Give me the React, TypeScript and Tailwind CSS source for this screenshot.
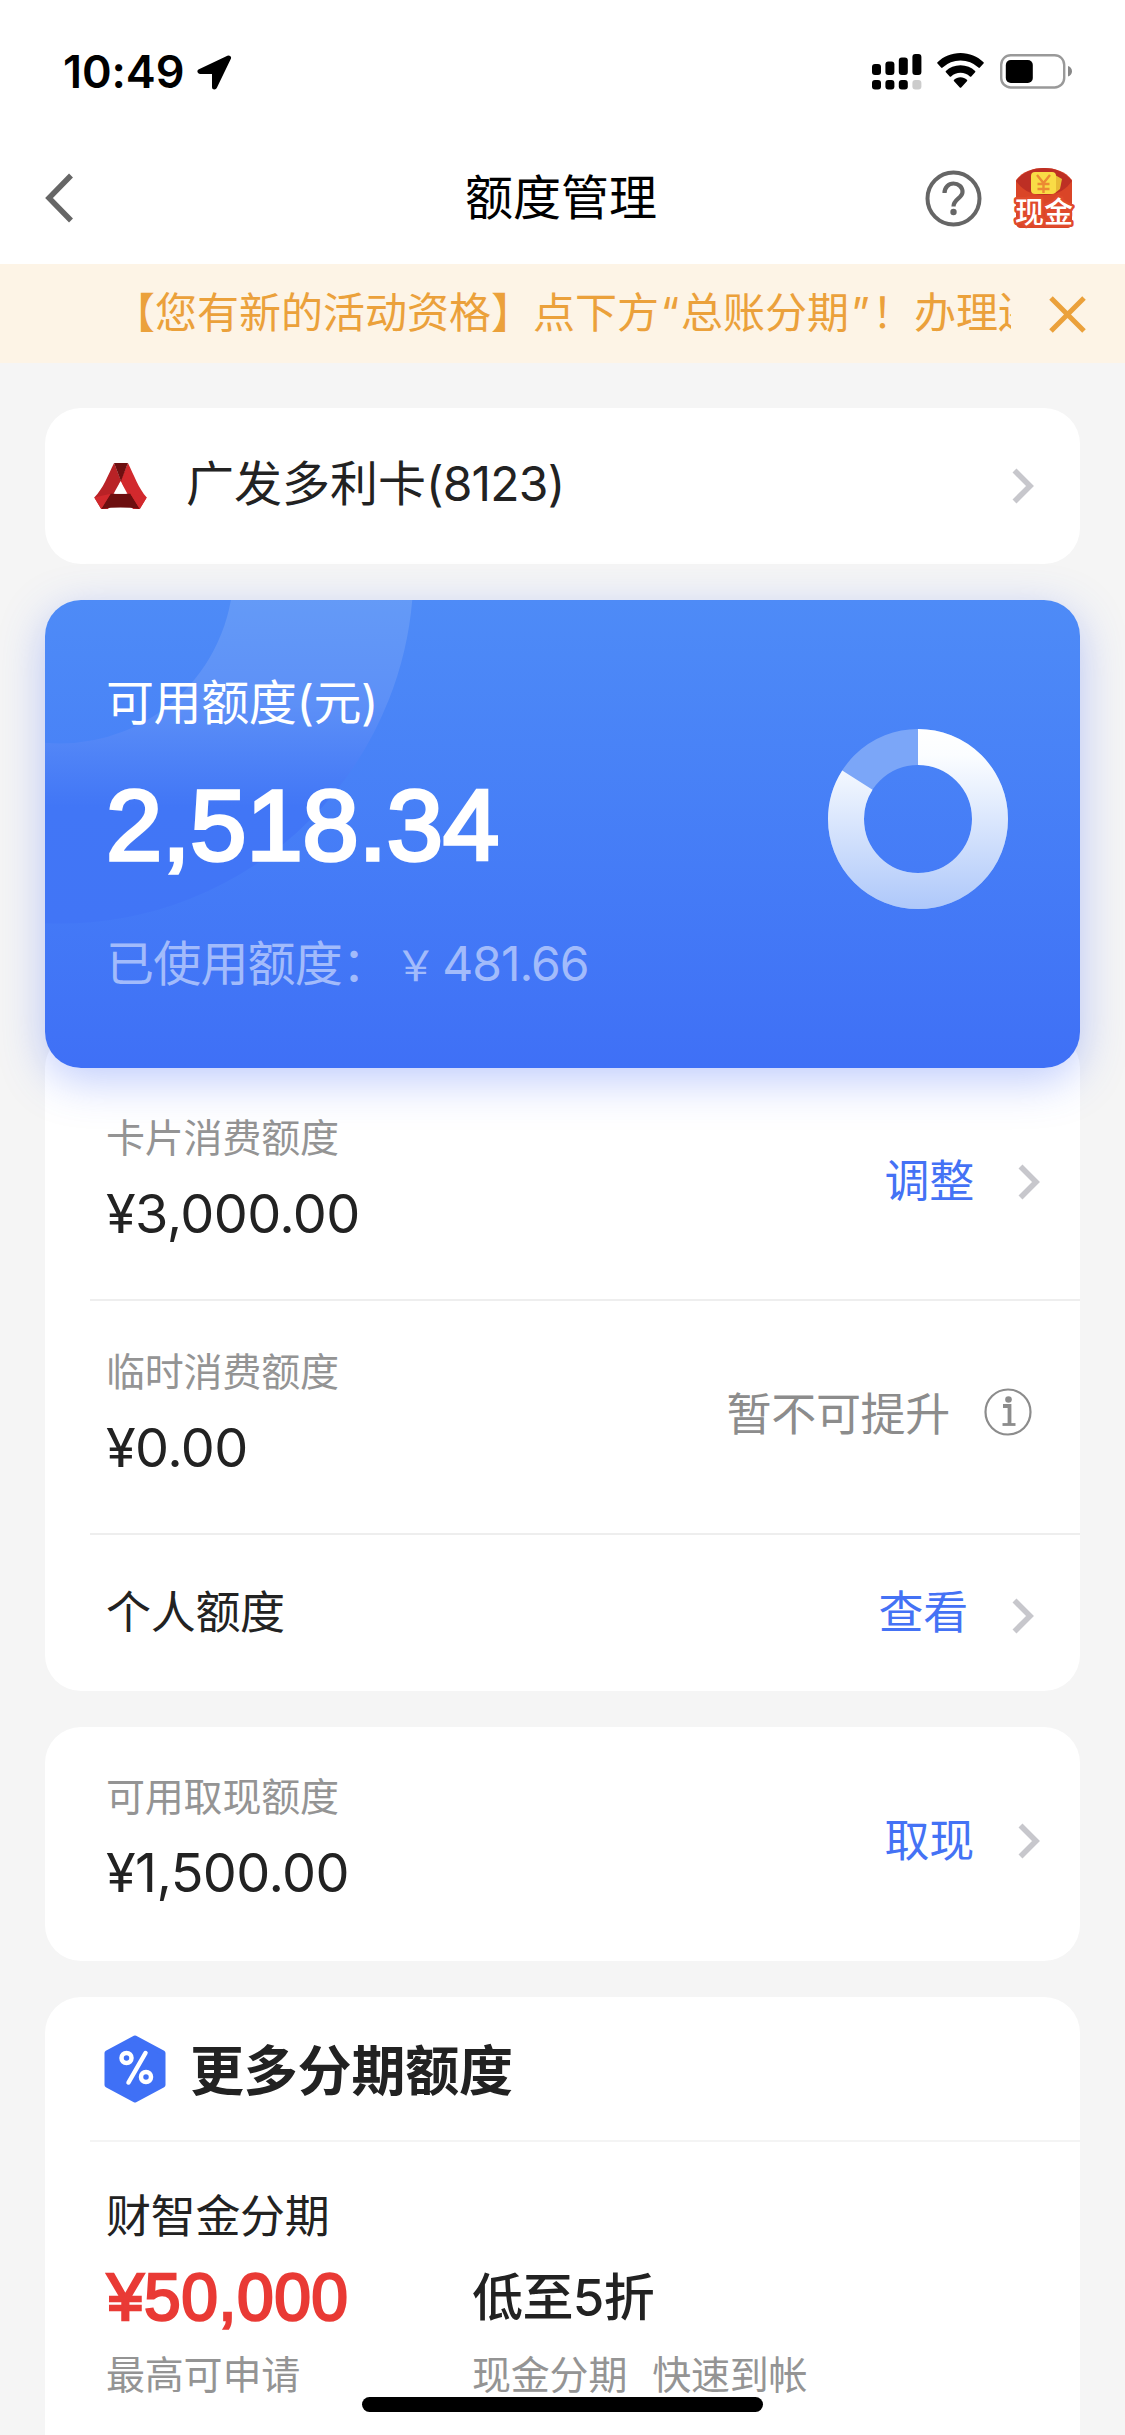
import React from 'react';

function Card({ children, className = '' }: { children: React.ReactNode; className?: string }) {
  return <section className={`mx-[45px] rounded-[36px] bg-white ${className}`}>{children}</section>;
}

function Chevron({ className = '' }: { className?: string }) {
  return (
    <svg className={className} width="22" height="36" viewBox="0 0 22 36" fill="none" stroke="#c7c7cc" strokeWidth="5.6">
      <path d="M2.5 2.5 18 18 2.5 33.5" />
    </svg>
  );
}

function Action({ label, className = '', iconClassName = '' }: { label: string; className?: string; iconClassName?: string }) {
  return (
    <div className={`flex items-center gap-[44px] ${className}`}>
      <span className="text-[45px] leading-[60px] tracking-[-0.3px] text-[#4472f5]">{label}</span>
      <Chevron className={iconClassName} />
    </div>
  );
}

function LimitText({ label, amount }: { label: string; amount: string }) {
  return (
    <div>
      <div className="text-[39px] leading-[54px] tracking-[-0.2px] text-[#949494]">{label}</div>
      <div className="mt-[17px] text-[54px] leading-[64px] tracking-[-0.6px] text-[#222222]">{amount}</div>
    </div>
  );
}

function StatusBar() {
  const bars = [
    { x: 0, y: 10, h: 11 },
    { x: 13.4, y: 7.5, h: 13.5 },
    { x: 26.8, y: 3.5, h: 17.5 },
    { x: 40.4, y: 0, h: 21 },
  ];
  return (
    <div className="flex h-[132px] items-start pt-[44px]">
      <span className="ml-[63px] w-[134px] text-[45px] leading-[56px] font-semibold tracking-[-0.1px] text-black">10:49</span>
      <svg className="mt-[11px]" width="35" height="35" viewBox="0 0 35 35">
        <path
          d="M31.500 3 3 16.500h14.500V32Z"
          fill="#000"
          stroke="#000"
          strokeWidth="5"
          strokeLinejoin="round"
        />
      </svg>
      <svg className="mt-[10px] ml-[640px]" width="50" height="36" viewBox="0 0 50 36">
        {bars.map((b, i) => (
          <g key={b.x}>
            <rect x={b.x} y={b.y} width="9" height={b.h} rx="3" fill="#000" />
            <rect x={b.x} y="26" width="9" height="9.500" rx="3" fill={i === 3 ? '#cccccc' : '#000'} />
          </g>
        ))}
      </svg>
      <svg className="mt-[9px] ml-[15px]" width="47" height="36" viewBox="0 0 47 36">
        <path d="M23.500 0C32.500 0 40.500 3.500 46.500 9.200a1 1 0 0 1 0 1.400l-3.600 4a1 1 0 0 1-1.500 0A26.500 26.500 0 0 0 23.500 7.600 26.500 26.500 0 0 0 5.600 14.600a1 1 0 0 1-1.500 0l-3.600-4a1 1 0 0 1 0-1.400C6.500 3.500 14.500 0 23.500 0Z" />
        <path d="M23.500 12.200c5.800 0 10.900 2.100 14.600 5.700a1 1 0 0 1 0 1.400l-3.800 4.100a1 1 0 0 1-1.400 0 14 14 0 0 0-18.800 0 1 1 0 0 1-1.400 0l-3.800-4.100a1 1 0 0 1 0-1.400c3.700-3.600 8.800-5.700 14.600-5.700Z" />
        <path d="M23.500 24.300c2.500 0 4.700.9 6.400 2.400a1 1 0 0 1 0 1.500l-5.700 6.200a1 1 0 0 1-1.400 0l-5.700-6.200a1 1 0 0 1 0-1.500c1.700-1.500 3.900-2.400 6.400-2.400Z" />
      </svg>
      <svg className="mt-[10px] ml-[16px]" width="74" height="35" viewBox="0 0 74 35">
        <rect x="1.200" y="1.200" width="63" height="32.300" rx="9.500" fill="none" stroke="#999" strokeWidth="2.400" />
        <rect x="5.800" y="6" width="27" height="23" rx="5" />
        <path d="M68 12c2.500.8 4 2.800 4 5.200s-1.500 4.400-4 5.200Z" fill="#888" />
      </svg>
    </div>
  );
}

function CashBadge() {
  return (
    <svg width="62" height="62" viewBox="0 0 62 62">
      <path d="M3 13C10 4 20 1 31 1s21 3 28 12v43c0 3-2 5-5 5H8c-3 0-5-2-5-5Z" fill="#da4527" />
      <path d="M3 14C10 5 20 1 31 1s21 4 28 13C54 21 46 28 31 28S8 21 3 14Z" fill="#bd2f24" />
      <path d="m42 8 7 4-2 10-5 4Z" fill="#e8bb35" />
      <rect x="18" y="5" width="25" height="22" rx="4" fill="#f9dc46" />
      <path d="m24 8 6.500 8L37 8M30.500 16v10M24.500 17h12M24.500 22h12" fill="none" stroke="#ec8a33" strokeWidth="2.400" />
      <text
        x="31"
        y="56"
        textAnchor="middle"
        fontSize="29"
        fontWeight="500"
        fill="#fff"
        stroke="#e04a2c"
        strokeWidth="5"
        strokeLinejoin="round"
        paintOrder="stroke"
      >
        现金
      </text>
    </svg>
  );
}

function NavBar() {
  return (
    <header className="flex h-[132px] items-center">
      <svg className="ml-[45px]" width="30" height="50" viewBox="0 0 30 50" fill="none" stroke="#666" strokeWidth="5.500">
        <path d="M26 2.500 4 25l22 22.500" />
      </svg>
      <h1 className="ml-[390px] w-[192px] text-[48px] leading-[60px] text-black">额度管理</h1>
      <svg className="ml-[268px]" width="57" height="57" viewBox="0 0 57 57" fill="none" stroke="#666">
        <circle cx="28.500" cy="28.500" r="26" strokeWidth="4" />
        <path d="M19.500 23c0-5.500 4-9.500 9-9.500s9 3.500 9 8.500c0 6-9 7-9 14.500" strokeWidth="4.200" />
        <circle cx="28.500" cy="42" r="3.200" fill="#666" stroke="none" />
      </svg>
      <div className="ml-[31px]">
        <CashBadge />
      </div>
    </header>
  );
}

function Notice() {
  return (
    <div className="flex h-[99px] items-center bg-[#fdf4e6] text-[#eba13b]">
      <div className="mb-[2px] ml-[113px] w-[898px] overflow-hidden text-[42px] leading-[60px] whitespace-nowrap">
        【您有新的活动资格】点下方<span className="inline-block w-[22px] text-center">“</span>总账分期
        <span className="inline-block w-[23px] text-center">”</span>！办理还
      </div>
      <svg className="mt-[2px] ml-[38px]" width="37" height="37" viewBox="0 0 37 37" stroke="#eba13b" strokeWidth="5">
        <path d="m2 2 33 33M35 2 2 35" />
      </svg>
    </div>
  );
}

function BankLogo() {
  return (
    <svg width="53" height="46" viewBox="0 0 53 46.5">
      <path d="M20 0 27 18 14 46.500H7L0 35C9 26 14 12 20 0Z" fill="#b92226" />
      <path d="M34 0c6 12 11 26 19 35l-7 11.500h-7L26.500 18Z" fill="#d2292d" />
      <path d="m20 0 7 18.500L34 0Z" fill="#6d0f10" />
      <path d="M16.500 31h20L46 46.500c-13-2-26-2-39 0Z" fill="#6d0f10" />
      <path d="m0 35 16.500-4L7 46.500ZM53 35l-16.500-4L46 46.500Z" fill="#d2292d" />
      <path d="m26.500 18.500-7 12.500h14Z" fill="#fff" />
    </svg>
  );
}

function Donut() {
  const r = 72;
  const len = 2 * Math.PI * r;
  const used = 481.66 / 3000;
  return (
    <svg width="180" height="180" viewBox="0 0 180 180" fill="none" strokeWidth="36">
      <defs>
        <linearGradient id="ring" gradientUnits="userSpaceOnUse" x1="180" y1="0" x2="0" y2="0">
          <stop offset="0" stopColor="#ffffff" />
          <stop offset=".15" stopColor="#fbfdff" />
          <stop offset="1" stopColor="#aec8fa" />
        </linearGradient>
      </defs>
      <g transform="rotate(-90 90 90)">
        <circle cx="90" cy="90" r={r} stroke="#7ba6f8" />
        <circle cx="90" cy="90" r={r} stroke="url(#ring)" strokeDasharray={`${len * (1 - used)} ${len}`} />
      </g>
    </svg>
  );
}

function Available() {
  return (
    <section className="relative z-10 mx-[45px] mt-[36px] flex h-[468px] rounded-[36px] bg-linear-to-b from-[#4e8bf7] to-[#3f70f6] shadow-[0_12px_45px_rgba(64,104,246,0.34)]">
      <svg className="absolute inset-0 rounded-[36px]" width="1035" height="468" viewBox="0 0 1035 468">
        <defs>
          <linearGradient id="arc" gradientUnits="userSpaceOnUse" x1="0" y1="0" x2="0" y2="323">
            <stop offset="0" stopColor="#649af7" />
            <stop offset=".32" stopColor="#5d90f7" />
            <stop offset=".64" stopColor="#4176f6" />
            <stop offset="1" stopColor="#4175f6" />
          </linearGradient>
        </defs>
        <circle cx="15" cy="-30" r="263.500" fill="none" stroke="url(#arc)" strokeWidth="180" />
      </svg>
      <div className="relative w-[783px] pl-[61px] text-white">
        <div className="mt-[73px] text-[48px] leading-[60px] tracking-[-0.4px]">可用额度(元)</div>
        <div className="mt-[37px] font-['Liberation_Sans',sans-serif] text-[101px] leading-[110px] [-webkit-text-stroke:3.6px_white]">
          2,518.34
        </div>
        <div className="mt-[54px] text-[48px] leading-[60px] whitespace-nowrap text-[#a2bbfb]">
          <span className="tracking-[-0.8px]">已使用额度：</span>
          <span className="inline-block w-[53px] text-center text-[42px]">￥</span>
          <span className="tracking-[-1px]">481.66</span>
        </div>
      </div>
      <div className="relative mt-[129px]">
        <Donut />
      </div>
    </section>
  );
}

function Info() {
  return (
    <svg className="mb-[5px]" width="48" height="48" viewBox="0 0 48 48" fill="none" stroke="#8c8c8c">
      <circle cx="24" cy="24" r="22.500" strokeWidth="2.200" />
      <circle cx="24.500" cy="11.500" r="3.300" fill="#8c8c8c" stroke="none" />
      <path d="M19 18h6.500v18.500" strokeWidth="3.800" />
      <path d="M18.500 36.500h13" strokeWidth="2.800" />
    </svg>
  );
}

function PercentIcon() {
  return (
    <svg width="62" height="68" viewBox="0 0 62 68">
      <path d="M31 3 59 18v32L31 65 3 50V18Z" fill="#3f70f6" stroke="#3f70f6" strokeWidth="5" strokeLinejoin="round" />
      <g fill="none" stroke="#fff" strokeWidth="4.500" strokeLinecap="round">
        <circle cx="22.500" cy="23" r="5" />
        <circle cx="42" cy="42" r="5" />
        <path d="M41.500 18 24.500 47.500" />
      </g>
    </svg>
  );
}

export default function App() {
  return (
    <main className="relative h-[2435px] w-[1125px] overflow-hidden bg-[#f5f5f5] font-[Inter,'Noto_Sans_CJK_SC',sans-serif] text-[#222222]">
      <div className="bg-white">
        <StatusBar />
        <NavBar />
      </div>
      <Notice />

      <Card className="mt-[45px] flex h-[156px] items-center">
        <div className="ml-[49px]">
          <BankLogo />
        </div>
        <div className="mb-[4px] ml-[39px] flex-1 text-[48px] leading-[60px]">
          广发多利卡<span className="tracking-[-0.8px]">(8123)</span>
        </div>
        <div className="mr-[46px]">
          <Chevron />
        </div>
      </Card>

      <Available />

      <Card className="-mt-[36px] h-[659px] pt-[36px]">
        <div className="flex h-[231px] justify-between pt-[43px] pl-[61px]">
          <LimitText label="卡片消费额度" amount="¥3,000.00" />
          <Action label="调整" className="mr-[40px] h-[141px]" />
        </div>
        <div className="ml-[45px] h-[2px] bg-[#eeeeee]" />
        <div className="flex h-[232px] justify-between pt-[44px] pl-[61px]">
          <LimitText label="临时消费额度" amount="¥0.00" />
          <div className="mr-[48px] flex h-[139px] items-center gap-[34px]">
            <span className="text-[45px] leading-[60px] tracking-[-0.3px] text-[#8c8c8c]">暂不可提升</span>
            <Info />
          </div>
        </div>
        <div className="ml-[45px] h-[2px] bg-[#eeeeee]" />
        <div className="flex h-[156px] items-center justify-between pl-[61px]">
          <span className="text-[45px] leading-[60px] tracking-[-0.3px]">个人额度</span>
          <Action label="查看" className="mr-[46px]" iconClassName="mt-[6px]" />
        </div>
      </Card>

      <Card className="mt-[36px] flex h-[234px] justify-between pt-[43px] pl-[61px]">
        <LimitText label="可用取现额度" amount="¥1,500.00" />
        <Action label="取现" className="mr-[40px] h-[142px]" />
      </Card>

      <Card className="mt-[36px] h-[480px]">
        <div className="flex h-[143px] items-center pl-[59px]">
          <PercentIcon />
          <h2 className="mt-[7px] ml-[24px] text-[54px] leading-[70px] font-bold tracking-[-0.2px]">更多分期额度</h2>
        </div>
        <div className="ml-[45px] h-[2px] bg-[#f4f4f4]" />
        <div className="pt-[45px] pl-[61px]">
          <div className="text-[45px] leading-[60px] tracking-[-0.3px]">财智金分期</div>
          <div className="mt-[12px] grid grid-cols-[366px_1fr]">
            <div className="pl-px font-['Liberation_Sans',sans-serif] text-[66px] leading-[76px] tracking-[0.4px] text-[#e93a35] [-webkit-text-stroke:2.4px_#e93a35]">
              ¥50,000
            </div>
            <div className="text-[51px] leading-[77px] font-medium tracking-[-0.6px]">低至5折</div>
            <div className="mt-[12px] text-[39px] leading-[54px] tracking-[-0.2px] text-[#949494]">最高可申请</div>
            <div className="mt-[12px] flex gap-[25px] text-[39px] leading-[54px] tracking-[-0.2px] text-[#949494]">
              <span>现金分期</span>
              <span>快速到帐</span>
            </div>
          </div>
        </div>
      </Card>

      {/* home indicator */}
      <div className="absolute bottom-[23px] left-[362px] z-20 h-[15px] w-[401px] rounded-full bg-black" />
    </main>
  );
}
